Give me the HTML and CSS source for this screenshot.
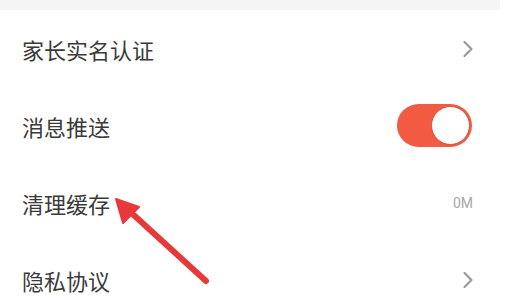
FILE: index.html
```html
<!DOCTYPE html>
<html lang="zh">
<head>
<meta charset="utf-8">
<link rel="stylesheet" href="styles.css">
</head>
<body>
<div class="screen">
  <div class="band"></div>
  <div class="list">
    <div class="row">
      <span class="label">家长实名认证</span>
      <svg class="chev" width="12" height="18" viewBox="0 0 12 18"><path d="M2.5 2 L9.5 9 L2.5 16" fill="none" stroke="#9a9a9a" stroke-width="2.2" stroke-linecap="round" stroke-linejoin="round"/></svg>
    </div>
    <div class="row">
      <span class="label">消息推送</span>
      <div class="toggle"><div class="knob"></div></div>
    </div>
    <div class="row">
      <span class="label">清理缓存</span>
      <span class="value">0M</span>
    </div>
    <div class="row">
      <span class="label">隐私协议</span>
      <svg class="chev" width="12" height="18" viewBox="0 0 12 18"><path d="M2.5 2 L9.5 9 L2.5 16" fill="none" stroke="#9a9a9a" stroke-width="2.2" stroke-linecap="round" stroke-linejoin="round"/></svg>
    </div>
  </div>
  <svg class="arrow" width="510" height="300" viewBox="0 0 510 300">
    <line x1="206" y1="281" x2="126" y2="208" stroke="#e8393a" stroke-width="6" stroke-linecap="round"/>
    <polygon points="116,199 139,207 123,223" fill="#e8393a" stroke="#e8393a" stroke-width="2" stroke-linejoin="round"/>
  </svg>
</div>
</body>
</html>
```
FILE: styles.css
```css
html, body {
  margin: 0;
  padding: 0;
  background: #ffffff;
}
.screen {
  position: relative;
  width: 510px;
  height: 300px;
  overflow: hidden;
  font-family: "Noto Sans CJK SC", "Noto Sans", sans-serif;
}
.band {
  width: 500px;
  height: 10px;
  background: #f5f5f5;
}
.list {
  width: 500px;
  display: flex;
  flex-direction: column;
}
.row {
  height: 77px;
  display: flex;
  align-items: center;
  justify-content: space-between;
  padding: 0 27px 0 22px;
}
.label {
  font-size: 22px;
  color: #3a3a3a;
  line-height: 1;
}
.chev {
  display: block;
  margin-right: -1px;
}
.value {
  font-family: "Roboto", "Noto Sans", sans-serif;
  font-size: 14px;
  color: #a8a8a8;
}
.toggle {
  width: 75px;
  height: 43px;
  border-radius: 22px;
  background: #f25a42;
  display: flex;
  align-items: center;
  justify-content: flex-end;
  padding: 0 2px;
  box-sizing: border-box;
  margin-right: 1px;
}
.knob {
  width: 37px;
  height: 37px;
  border-radius: 50%;
  background: #ffffff;
  border: 1px solid #d4503c;
}
.arrow {
  position: absolute;
  left: 0;
  top: 0;
}
```
